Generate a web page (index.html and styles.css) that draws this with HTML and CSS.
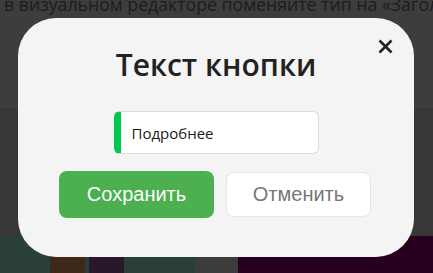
FILE: index.html
```
<!DOCTYPE html>
<html lang="ru">
<head>
<meta charset="utf-8">
<link rel="stylesheet" href="styles.css">
</head>
<body>
<div class="page">
  <p class="page-text">в визуальном редакторе поменяйте тип на «Загол</p>
  <div class="band-light"></div>
  <div class="band-dark"></div>
  <div class="strip">
    <span class="blk blk-green"></span>
    <span class="blk blk-brown"></span>
    <span class="blk blk-gap"></span>
    <span class="blk blk-purple"></span>
    <span class="blk blk-green2"></span>
    <span class="blk blk-gray"></span>
    <span class="blk blk-magenta"></span>
  </div>
</div>
<div class="modal">
  <button class="close" aria-label="Закрыть">
    <svg width="15" height="15" viewBox="0 0 15 15"><path d="M1.5 1.5L13.5 13.5M13.5 1.5L1.5 13.5" stroke="#222" stroke-width="2.6" fill="none"/></svg>
  </button>
  <h2 class="title">Текст кнопки</h2>
  <div class="field"><span class="field-text">Подробнее</span></div>
  <div class="actions">
    <button class="btn btn-save">Сохранить</button>
    <button class="btn btn-cancel">Отменить</button>
  </div>
</div>
</body>
</html>
```
FILE: styles.css
```
html, body {
  margin: 0;
  padding: 0;
  width: 433px;
  height: 273px;
  overflow: hidden;
  background: #3d3d3d;
}
body {
  position: relative;
  font-family: "Open Sans", sans-serif;
}
.page {
  display: flex;
  flex-direction: column;
  height: 273px;
}
.page-text {
  margin: -8px 0 0 4px;
  font-size: 17.7px;
  line-height: 25px;
  color: #1c1c1c;
  white-space: nowrap;
  overflow: hidden;
}
.band-light {
  height: 91px;
  background: #3d3d3d;
}
.band-dark {
  height: 128px;
  background: #373737;
}
.strip {
  display: flex;
  flex: 1;
}
.blk { display: block; height: 100%; }
.blk-green { width: 50px; background: #2a3f37; }
.blk-brown { width: 35px; background: #3f2818; }
.blk-gap { width: 4px; background: #2a3f37; }
.blk-purple { width: 35px; background: #29182a; }
.blk-green2 { width: 71px; background: #2a3f37; }
.blk-gray { width: 43px; background: #3c3c3c; }
.blk-magenta { flex: 1; background: #27001f; }

.modal {
  position: absolute;
  left: 18px;
  top: 18px;
  width: 396px;
  height: 239px;
  box-sizing: border-box;
  border-radius: 38px;
  background: #f4f4f4;
  display: flex;
  flex-direction: column;
  align-items: center;
  padding-top: 26px;
}
.close {
  position: absolute;
  left: 360px;
  top: 21px;
  width: 15px;
  height: 15px;
  padding: 0;
  border: 0;
  background: none;
  display: flex;
}
.title {
  margin: 0;
  font-size: 30px;
  font-weight: 600;
  line-height: 42px;
  color: #222;
}
.field {
  margin-top: 25px;
  width: 205px;
  height: 43px;
  box-sizing: border-box;
  border: 1px solid #dcdcdc;
  border-left: 7px solid #00c853;
  border-radius: 6px;
  background: #fff;
  display: flex;
  align-items: center;
  padding-left: 11px;
}
.field-text {
  font-size: 15px;
  color: #1a1a1a;
}
.actions {
  margin-top: 17px;
  display: flex;
  align-items: center;
  gap: 12px;
  margin-left: -2px;
}
.btn {
  font-family: "Liberation Sans", Arial, sans-serif;
  font-size: 20px;
  border-radius: 8px;
  padding: 0;
  cursor: pointer;
}
.btn-save {
  width: 155px;
  height: 47px;
  background: #4caf50;
  color: #fff;
  border: 0;
}
.btn-cancel {
  width: 145px;
  height: 45px;
  background: #fff;
  color: #777;
  border: 1px solid #e6e6e6;
}
```
